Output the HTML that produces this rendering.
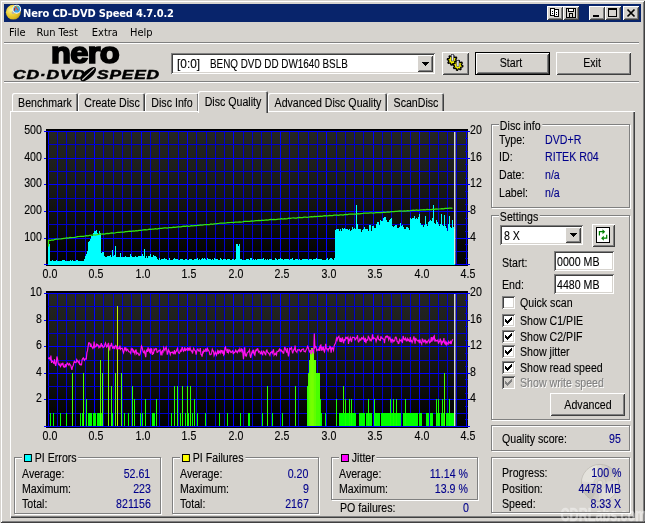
<!DOCTYPE html>
<html><head><meta charset="utf-8"><title>Nero CD-DVD Speed 4.7.0.2</title>
<style>
html,body{margin:0;padding:0}
body{width:645px;height:523px;overflow:hidden;background:#d6d3ce;position:relative;font-family:"Liberation Sans",sans-serif;font-size:12.5px;color:#000}
#root{position:absolute;left:0;top:0;width:645px;height:523px;will-change:transform}
.abs{position:absolute;display:block}
.win{position:absolute;left:0;top:0;width:645px;height:523px;box-sizing:border-box;box-shadow:inset 1px 1px 0 #d6d3ce,inset -1px -1px 0 #404040,inset 2px 2px 0 #fff,inset -2px -2px 0 #808080}
.title{position:absolute;left:4px;top:4px;width:637px;height:18px;background:#08246b}
.ttl{position:absolute;left:23.1px;top:6px;line-height:16px;font-family:"DejaVu Sans Condensed","Liberation Sans",sans-serif;font-weight:bold;font-size:11px;color:#fff;white-space:nowrap;letter-spacing:-0.15px}
.mn{position:absolute;top:25px;line-height:16px;font-family:"DejaVu Sans Condensed","Liberation Sans",sans-serif;font-size:11px;white-space:nowrap}
.sep{position:absolute;left:4px;width:635px;height:1px;background:#808080;border-bottom:1px solid #fff}
.rs{position:absolute;box-sizing:border-box;background:#d6d3ce;box-shadow:inset 1px 1px 0 #fff,inset -1px -1px 0 #404040,inset 2px 2px 0 #d6d3ce,inset -2px -2px 0 #808080}
.rs svg{display:block}
.sk{position:absolute;box-sizing:border-box;box-shadow:inset 1px 1px 0 #808080,inset -1px -1px 0 #fff,inset 2px 2px 0 #404040,inset -2px -2px 0 #d6d3ce}
.sk svg{display:block}
.gb{position:absolute;border:1px solid #808080;box-shadow:1px 1px 0 #fff,inset 1px 1px 0 #fff}
.gl{position:absolute;line-height:16px;-webkit-text-stroke:0.12px;background:#d6d3ce;padding:0 2px 0 1px;white-space:nowrap;transform:scaleX(.85);transform-origin:0 0}
.sq{display:inline-block;width:6px;height:6px;border:1px solid #000;margin:0 4px 0 2px;vertical-align:0px;transform:scaleX(1.16)}
.t{position:absolute;line-height:16px;-webkit-text-stroke:0.12px;white-space:nowrap;transform:scaleX(.85);transform-origin:0 0}
.t.r{transform-origin:100% 0;text-align:right}
.t.c{transform-origin:50% 0;text-align:center}
.v{color:#00008b}
.dis{color:#808080;text-shadow:1px 1px 0 #fff}
.ax{}
.nero{position:absolute;left:51.3px;top:37px;font-weight:bold;font-size:28.7px;line-height:32px;letter-spacing:-0.6px;-webkit-text-stroke:1.7px #000;color:#000;transform:scaleX(1.135);transform-origin:0 0}
.cds{position:absolute;top:66.5px;font-weight:bold;font-style:italic;font-size:12px;line-height:16px;letter-spacing:0.6px;-webkit-text-stroke:0.5px #000;transform:scaleX(1.45);transform-origin:0 0;white-space:nowrap}
.panel{position:absolute;box-sizing:border-box;box-shadow:inset 1px 1px 0 #fff,inset -1px -1px 0 #404040,inset -2px -2px 0 #808080}
.tab{position:absolute;box-sizing:border-box;background:#d6d3ce;border-radius:2px 2px 0 0;box-shadow:inset 1px 1px 0 #fff,inset -1px 0 0 #404040,inset -2px 0 0 #808080}
.tab.sel{box-shadow:inset 1px 1px 0 #fff,inset -1px 0 0 #404040,inset -2px 0 0 #808080}
.plot{position:absolute;background:linear-gradient(#000 0,#000 2px,#252623 2px,#1b1c1a 35%,#0e0e0d 68%,#000 98%)}
</style></head>
<body>
<div id="root">
<div class="win"></div>
<div class="title"></div>
<svg class="abs" style="left:5px;top:3.3px" width="18" height="18" viewBox="0 0 18 18">
<defs><radialGradient id="cdg" cx="0.35" cy="0.35" r="0.75"><stop offset="0" stop-color="#fbf3a0"/><stop offset="0.45" stop-color="#ecd03a"/><stop offset="0.8" stop-color="#d8b820"/><stop offset="1" stop-color="#a88a14"/></radialGradient></defs>
<circle cx="8.3" cy="9.2" r="7.4" fill="url(#cdg)"/>
<circle cx="8.2" cy="9.6" r="1.5" fill="#b8b4a0"/>
<circle cx="11.7" cy="6.2" r="3.9" fill="#38a4e8" stroke="#f4f6f8" stroke-width="1.1"/>
<path d="M9.2 4.6 A3 3 0 0 1 13.8 4" stroke="#7cc850" stroke-width="1" fill="none"/>
<path d="M10.2 3.4 L13.2 7.4" stroke="#e04828" stroke-width="1.1"/>
<path d="M9.6 5 L9.4 7.6" stroke="#c02010" stroke-width="1.2"/>
</svg>
<span class="ttl">Nero CD-DVD Speed 4.7.0.2</span>
<div class="rs" style="left:547px;top:6px;width:16px;height:14px"><svg width="16" height="14" viewBox="0 0 16 14" shape-rendering="crispEdges"><rect x="3.5" y="2.5" width="4" height="7" fill="#fff" stroke="#000"/><rect x="7.5" y="3.5" width="4" height="7" fill="#fff" stroke="#000"/><rect x="5" y="5" width="1" height="1"/><rect x="5" y="7" width="1" height="1"/><rect x="9" y="6" width="1" height="1"/><rect x="9" y="8" width="1" height="1"/></svg></div>
<div class="rs" style="left:563px;top:6px;width:16px;height:14px"><svg width="16" height="14" viewBox="0 0 16 14" shape-rendering="crispEdges"><rect x="3.5" y="2.5" width="9" height="9" fill="#d6d3ce" stroke="#000"/><rect x="5.5" y="2.5" width="5" height="3" fill="#fff" stroke="#000"/><rect x="6.5" y="7.5" width="3" height="4" fill="#d6d3ce" stroke="#000"/></svg></div>
<div class="rs" style="left:589px;top:6px;width:16px;height:14px"><svg width="16" height="14" viewBox="0 0 16 14" shape-rendering="crispEdges"><rect x="4" y="9" width="6" height="2"/></svg></div>
<div class="rs" style="left:605px;top:6px;width:16px;height:14px"><svg width="16" height="14" viewBox="0 0 16 14" shape-rendering="crispEdges"><rect x="3.5" y="2.5" width="8" height="8" fill="none" stroke="#000"/><rect x="3" y="2" width="9" height="2"/></svg></div>
<div class="rs" style="left:623px;top:6px;width:16px;height:14px"><svg width="16" height="14" viewBox="0 0 16 14"><path d="M4.5 3.5 L11.5 10.5 M11.5 3.5 L4.5 10.5" stroke="#000" stroke-width="1.7"/></svg></div>
<span class="mn" style="left:9px">File</span>
<span class="mn" style="left:36.5px">Run Test</span>
<span class="mn" style="left:91.8px">Extra</span>
<span class="mn" style="left:130px">Help</span>
<div class="sep" style="top:42px"></div>
<div class="sep" style="top:81px"></div>
<span class="nero">nero</span>
<span class="cds" style="left:13.3px">CD&#183;DVD</span>
<span class="cds" style="left:96.8px;transform:scaleX(1.44)">SPEED</span>
<svg class="abs" style="left:78px;top:65px" width="21" height="18" viewBox="78 65 21 18">
<ellipse cx="88.2" cy="74.2" rx="9.7" ry="4.1" transform="rotate(-41 88.2 74.2)" fill="#000"/>
<path d="M82.3 79.8 L94.3 68.4" stroke="#d6d3ce" stroke-width="1.2"/>
</svg>
<div class="sk" style="left:171px;top:53px;width:264px;height:21px;background:#fff"></div>
<span class="t " style="left:176.7px;top:56px;transform:scaleX(.95)">[0:0]</span>
<span class="t " style="left:210.0px;top:56px;transform:scaleX(.79)">BENQ DVD DD DW1640 BSLB</span>
<div class="rs" style="left:417px;top:55px;width:16px;height:17px;"><svg width="16" height="17" viewBox="0 0 16 17" shape-rendering="crispEdges"><rect x="5" y="7" width="7" height="1"/><rect x="6" y="8" width="5" height="1"/><rect x="7" y="9" width="3" height="1"/><rect x="8" y="10" width="1" height="1"/></svg></div>
<div class="rs" style="left:442px;top:52px;width:27px;height:23px;"><svg width="27" height="23" viewBox="0 0 27 23"><polygon points="15.28,8.69 15.08,9.65 13.47,9.90 13.08,10.48 13.47,12.07 12.66,12.61 11.35,11.64 10.65,11.78 9.81,13.18 8.85,12.98 8.60,11.37 8.02,10.98 6.43,11.37 5.89,10.56 6.86,9.25 6.72,8.55 5.32,7.71 5.52,6.75 7.13,6.50 7.52,5.92 7.13,4.33 7.94,3.79 9.25,4.76 9.95,4.62 10.79,3.22 11.75,3.42 12.00,5.03 12.58,5.42 14.17,5.03 14.71,5.84 13.74,7.15 13.88,7.85" fill="#f4f000" stroke="#000" stroke-width="1.3" stroke-linejoin="round"/><polygon points="20.88,13.89 20.68,14.85 19.07,15.10 18.68,15.68 19.07,17.27 18.26,17.81 16.95,16.84 16.25,16.98 15.41,18.38 14.45,18.18 14.20,16.57 13.62,16.18 12.03,16.57 11.49,15.76 12.46,14.45 12.32,13.75 10.92,12.91 11.12,11.95 12.73,11.70 13.12,11.12 12.73,9.53 13.54,8.99 14.85,9.96 15.55,9.82 16.39,8.42 17.35,8.62 17.60,10.23 18.18,10.62 19.77,10.23 20.31,11.04 19.34,12.35 19.48,13.05" fill="#f4f000" stroke="#000" stroke-width="1.3" stroke-linejoin="round"/><rect x="9.4" y="2.6" width="2.2" height="6.4" fill="#e8e8f0" stroke="#303040" stroke-width=".6"/><rect x="14.8" y="8.6" width="2.2" height="6" fill="#e8e8f0" stroke="#303040" stroke-width=".6"/></svg></div>
<div class="abs" style="left:475px;top:52px;width:75px;height:23px;background:#000"></div>
<div class="rs" style="left:476px;top:53px;width:73px;height:21px;"></div>
<span class="t c " style="left:410.8px;width:200px;top:55px;">Start</span>
<div class="rs" style="left:556px;top:52px;width:75px;height:23px;"></div>
<span class="t c " style="left:491.79999999999995px;width:200px;top:55px;">Exit</span>
<div class="panel" style="left:10px;top:111px;width:625px;height:407px"></div>
<div class="tab" style="left:12px;top:93px;width:66px;height:18px"></div>
<span class="t c " style="left:-55.0px;width:200px;top:95px;">Benchmark</span>
<div class="tab" style="left:78px;top:93px;width:67px;height:18px"></div>
<span class="t c " style="left:11.5px;width:200px;top:95px;">Create Disc</span>
<div class="tab" style="left:145px;top:93px;width:54px;height:18px"></div>
<span class="t c " style="left:72.0px;width:200px;top:95px;">Disc Info</span>
<div class="tab" style="left:268px;top:93px;width:119px;height:18px"></div>
<span class="t c " style="left:227.5px;width:200px;top:95px;">Advanced Disc Quality</span>
<div class="tab" style="left:387px;top:93px;width:57px;height:18px"></div>
<span class="t c " style="left:315.5px;width:200px;top:95px;">ScanDisc</span>
<div class="tab sel" style="left:198px;top:91px;width:70px;height:22px"></div>
<span class="t c " style="left:133px;width:200px;top:93.5px;">Disc Quality</span>
<div class="plot" style="left:46px;top:129px;width:422px;height:137px"></div>
<svg class="abs" style="left:40px;top:129px" width="436" height="137" viewBox="40 129 436 137" shape-rendering="crispEdges"><rect x="48" y="131" width="1" height="134" fill="#0000ff"/><rect x="57" y="131" width="1" height="134" fill="#0000cc"/><rect x="66" y="131" width="1" height="134" fill="#0000cc"/><rect x="75" y="131" width="1" height="134" fill="#0000cc"/><rect x="85" y="131" width="1" height="134" fill="#0000cc"/><rect x="94" y="131" width="1" height="134" fill="#0000ff"/><rect x="103" y="131" width="1" height="134" fill="#0000cc"/><rect x="113" y="131" width="1" height="134" fill="#0000cc"/><rect x="122" y="131" width="1" height="134" fill="#0000cc"/><rect x="131" y="131" width="1" height="134" fill="#0000cc"/><rect x="141" y="131" width="1" height="134" fill="#0000ff"/><rect x="150" y="131" width="1" height="134" fill="#0000cc"/><rect x="159" y="131" width="1" height="134" fill="#0000cc"/><rect x="168" y="131" width="1" height="134" fill="#0000cc"/><rect x="178" y="131" width="1" height="134" fill="#0000cc"/><rect x="187" y="131" width="1" height="134" fill="#0000ff"/><rect x="196" y="131" width="1" height="134" fill="#0000cc"/><rect x="206" y="131" width="1" height="134" fill="#0000cc"/><rect x="215" y="131" width="1" height="134" fill="#0000cc"/><rect x="224" y="131" width="1" height="134" fill="#0000cc"/><rect x="233" y="131" width="1" height="134" fill="#0000ff"/><rect x="243" y="131" width="1" height="134" fill="#0000cc"/><rect x="252" y="131" width="1" height="134" fill="#0000cc"/><rect x="261" y="131" width="1" height="134" fill="#0000cc"/><rect x="271" y="131" width="1" height="134" fill="#0000cc"/><rect x="280" y="131" width="1" height="134" fill="#0000ff"/><rect x="289" y="131" width="1" height="134" fill="#0000cc"/><rect x="298" y="131" width="1" height="134" fill="#0000cc"/><rect x="308" y="131" width="1" height="134" fill="#0000cc"/><rect x="317" y="131" width="1" height="134" fill="#0000cc"/><rect x="326" y="131" width="1" height="134" fill="#0000ff"/><rect x="336" y="131" width="1" height="134" fill="#0000cc"/><rect x="345" y="131" width="1" height="134" fill="#0000cc"/><rect x="354" y="131" width="1" height="134" fill="#0000cc"/><rect x="363" y="131" width="1" height="134" fill="#0000cc"/><rect x="373" y="131" width="1" height="134" fill="#0000ff"/><rect x="382" y="131" width="1" height="134" fill="#0000cc"/><rect x="391" y="131" width="1" height="134" fill="#0000cc"/><rect x="401" y="131" width="1" height="134" fill="#0000cc"/><rect x="410" y="131" width="1" height="134" fill="#0000cc"/><rect x="419" y="131" width="1" height="134" fill="#0000ff"/><rect x="429" y="131" width="1" height="134" fill="#0000cc"/><rect x="438" y="131" width="1" height="134" fill="#0000cc"/><rect x="447" y="131" width="1" height="134" fill="#0000cc"/><rect x="456" y="131" width="1" height="134" fill="#0000cc"/><rect x="466" y="131" width="1" height="134" fill="#0000ff"/><rect x="44" y="131" width="426" height="1" fill="#0000ff"/><rect x="46" y="144" width="422" height="1" fill="#0000cc"/><rect x="44" y="158" width="426" height="1" fill="#0000ff"/><rect x="46" y="171" width="422" height="1" fill="#0000cc"/><rect x="44" y="184" width="426" height="1" fill="#0000ff"/><rect x="46" y="198" width="422" height="1" fill="#0000cc"/><rect x="44" y="211" width="426" height="1" fill="#0000ff"/><rect x="46" y="224" width="422" height="1" fill="#0000cc"/><rect x="44" y="238" width="426" height="1" fill="#0000ff"/><rect x="46" y="251" width="422" height="1" fill="#0000cc"/><rect x="44" y="264" width="426" height="1" fill="#0000ff"/><rect x="465" y="138" width="3" height="1" fill="#0000d0"/><rect x="465" y="151" width="3" height="1" fill="#0000d0"/><rect x="465" y="164" width="3" height="1" fill="#0000d0"/><rect x="465" y="178" width="3" height="1" fill="#0000d0"/><rect x="465" y="191" width="3" height="1" fill="#0000d0"/><rect x="465" y="204" width="3" height="1" fill="#0000d0"/><rect x="465" y="218" width="3" height="1" fill="#0000d0"/><rect x="465" y="231" width="3" height="1" fill="#0000d0"/><rect x="465" y="244" width="3" height="1" fill="#0000d0"/><rect x="465" y="258" width="3" height="1" fill="#0000d0"/><rect x="46" y="129" width="2" height="137" fill="#000"/><rect x="44" y="131" width="4" height="1" fill="#0000ff"/><rect x="44" y="264" width="4" height="1" fill="#0000ff"/><polygon points="48,264.5 48.0,243.0 48.5,245.7 49.0,244.8 49.5,244.1 50.0,245.7 50.5,261.4 51.0,260.7 51.5,260.9 52.0,260.8 52.5,260.3 53.0,259.8 53.5,260.6 54.0,261.2 54.5,260.8 55.0,261.4 55.5,261.3 56.0,261.0 56.5,260.1 57.0,260.9 57.5,261.2 58.0,261.3 58.5,261.0 59.0,260.2 59.5,260.8 60.0,261.2 60.5,261.0 61.0,261.2 61.5,261.0 62.0,260.5 62.5,260.0 63.0,260.5 63.5,259.9 64.0,260.9 64.5,260.4 65.0,260.7 65.5,261.3 66.0,261.2 66.5,261.0 67.0,261.0 67.5,260.9 68.0,261.3 68.5,260.9 69.0,259.8 69.5,260.9 70.0,261.2 70.5,259.9 71.0,260.9 71.5,261.3 72.0,261.1 72.5,259.9 73.0,261.1 73.5,260.6 74.0,261.1 74.5,261.3 75.0,261.2 75.5,261.0 76.0,261.3 76.5,260.0 77.0,261.1 77.5,260.2 78.0,260.9 78.5,260.6 79.0,259.9 79.5,261.1 80.0,261.0 80.5,261.2 81.0,261.4 81.5,260.7 82.0,260.4 82.5,260.9 83.0,260.2 83.5,261.2 84.0,260.7 84.5,259.3 85.0,257.4 85.5,255.9 86.0,255.3 86.5,253.9 87.0,252.7 87.5,251.3 88.0,242.8 88.5,242.2 89.0,241.2 89.5,240.7 90.0,239.6 90.5,239.0 91.0,235.0 91.5,236.2 92.0,236.3 92.5,236.0 93.0,230.6 93.5,232.6 94.0,231.4 94.5,231.4 95.0,233.2 95.5,230.6 96.0,229.0 96.5,230.3 97.0,230.3 97.5,233.0 98.0,234.4 98.5,234.0 99.0,233.8 99.5,230.9 100.0,230.9 100.5,232.6 101.0,251.9 101.5,252.5 102.0,251.7 102.5,252.2 103.0,250.7 103.5,252.0 104.0,257.0 104.5,256.0 105.0,255.7 105.5,256.5 106.0,256.5 106.5,257.0 107.0,255.8 107.5,256.4 108.0,257.2 108.5,256.3 109.0,257.4 109.5,256.4 110.0,256.5 110.5,255.2 111.0,256.1 111.5,256.8 112.0,249.8 112.5,249.8 113.0,256.8 113.5,256.2 114.0,255.7 114.5,255.6 115.0,246.3 115.5,246.3 116.0,255.6 116.5,257.1 117.0,257.0 117.5,257.2 118.0,255.6 118.5,256.8 119.0,257.2 119.5,256.6 120.0,252.5 120.5,252.5 121.0,257.2 121.5,257.3 122.0,257.1 122.5,257.1 123.0,256.4 123.5,257.1 124.0,257.2 124.5,257.3 125.0,256.4 125.5,255.9 126.0,256.7 126.5,256.6 127.0,256.7 127.5,256.5 128.0,256.8 128.5,256.9 129.0,256.6 129.5,257.6 130.0,253.8 130.5,253.8 131.0,256.9 131.5,256.1 132.0,257.0 132.5,256.9 133.0,256.6 133.5,256.7 134.0,256.5 134.5,256.8 135.0,256.5 135.5,255.8 136.0,257.3 136.5,256.7 137.0,256.8 137.5,256.7 138.0,256.9 138.5,255.7 139.0,257.0 139.5,255.6 140.0,256.6 140.5,255.6 141.0,256.8 141.5,256.4 142.0,253.8 142.5,253.8 143.0,257.0 143.5,255.7 144.0,249.0 144.5,249.0 145.0,256.7 145.5,257.5 146.0,256.6 146.5,255.9 147.0,257.3 147.5,257.5 148.0,257.5 148.5,256.2 149.0,256.9 149.5,256.2 150.0,254.4 150.5,254.4 151.0,257.4 151.5,256.7 152.0,256.6 152.5,256.8 153.0,255.6 153.5,255.4 154.0,256.1 154.5,255.9 155.0,256.7 155.5,256.3 156.0,257.0 156.5,256.6 157.0,259.5 157.5,259.2 158.0,259.3 158.5,259.8 159.0,259.6 159.5,258.2 160.0,259.2 160.5,259.8 161.0,259.3 161.5,259.4 162.0,259.2 162.5,258.5 163.0,259.5 163.5,259.4 164.0,259.7 164.5,258.3 165.0,259.9 165.5,259.4 166.0,258.9 166.5,258.9 167.0,259.8 167.5,259.7 168.0,259.8 168.5,259.5 169.0,259.0 169.5,258.2 170.0,259.5 170.5,259.9 171.0,259.6 171.5,259.6 172.0,259.7 172.5,259.5 173.0,259.3 173.5,259.0 174.0,259.0 174.5,258.4 175.0,259.7 175.5,258.5 176.0,259.6 176.5,259.4 177.0,258.8 177.5,258.5 178.0,258.7 178.5,259.7 179.0,259.4 179.5,259.6 180.0,259.3 180.5,259.1 181.0,258.3 181.5,258.7 182.0,259.2 182.5,258.9 183.0,258.4 183.5,259.8 184.0,259.4 184.5,259.8 185.0,259.8 185.5,259.5 186.0,258.4 186.5,259.2 187.0,259.4 187.5,259.6 188.0,259.6 188.5,259.8 189.0,259.7 189.5,259.3 190.0,259.4 190.5,259.4 191.0,259.7 191.5,259.2 192.0,259.5 192.5,259.6 193.0,258.2 193.5,259.5 194.0,258.5 194.5,259.3 195.0,259.6 195.5,259.4 196.0,259.4 196.5,259.4 197.0,259.6 197.5,258.2 198.0,258.4 198.5,259.6 199.0,259.6 199.5,259.0 200.0,259.4 200.5,259.8 201.0,259.4 201.5,259.2 202.0,259.5 202.5,258.4 203.0,259.2 203.5,259.2 204.0,259.1 204.5,258.4 205.0,258.6 205.5,258.9 206.0,259.7 206.5,259.6 207.0,258.3 207.5,258.2 208.0,258.8 208.5,259.1 209.0,259.0 209.5,259.1 210.0,259.6 210.5,259.3 211.0,259.8 211.5,259.6 212.0,258.3 212.5,258.5 213.0,258.8 213.5,259.5 214.0,259.8 214.5,258.2 215.0,259.7 215.5,259.1 216.0,259.6 216.5,258.8 217.0,258.4 217.5,259.3 218.0,259.2 218.5,259.5 219.0,259.5 219.5,259.6 220.0,259.4 220.5,258.3 221.0,258.8 221.5,258.9 222.0,259.7 222.5,259.5 223.0,258.8 223.5,259.3 224.0,259.2 224.5,259.2 225.0,258.5 225.5,259.3 226.0,259.7 226.5,259.7 227.0,258.6 227.5,259.1 228.0,259.9 228.5,259.4 229.0,258.7 229.5,259.5 230.0,258.3 230.5,259.7 231.0,258.4 231.5,259.5 232.0,259.8 232.5,259.0 233.0,259.5 233.5,258.9 234.0,259.7 234.5,259.6 235.0,259.0 235.5,259.0 236.0,259.3 236.5,243.9 237.0,244.4 237.5,244.2 238.0,245.2 238.5,245.9 239.0,243.7 239.5,243.9 240.0,258.7 240.5,258.8 241.0,259.7 241.5,259.2 242.0,258.3 242.5,259.5 243.0,259.7 243.5,259.7 244.0,259.5 244.5,259.8 245.0,258.7 245.5,259.6 246.0,259.0 246.5,259.4 247.0,259.7 247.5,258.6 248.0,259.2 248.5,259.4 249.0,259.5 249.5,259.6 250.0,259.6 250.5,258.3 251.0,259.8 251.5,258.4 252.0,259.3 252.5,259.8 253.0,259.7 253.5,259.3 254.0,258.5 254.5,259.6 255.0,259.5 255.5,258.5 256.0,259.4 256.5,259.5 257.0,259.1 257.5,259.3 258.0,258.1 258.5,258.9 259.0,259.8 259.5,259.1 260.0,259.1 260.5,259.1 261.0,259.4 261.5,259.4 262.0,259.3 262.5,259.3 263.0,259.1 263.5,258.3 264.0,259.7 264.5,259.5 265.0,259.3 265.5,259.3 266.0,259.6 266.5,259.6 267.0,259.7 267.5,259.4 268.0,259.2 268.5,259.7 269.0,258.8 269.5,259.4 270.0,259.8 270.5,259.0 271.0,258.1 271.5,259.4 272.0,258.4 272.5,259.7 273.0,259.7 273.5,259.5 274.0,259.7 274.5,259.6 275.0,258.6 275.5,258.1 276.0,259.2 276.5,259.3 277.0,259.2 277.5,259.6 278.0,259.4 278.5,259.0 279.0,259.1 279.5,259.1 280.0,258.8 280.5,258.2 281.0,258.8 281.5,259.2 282.0,258.2 282.5,259.0 283.0,259.4 283.5,259.5 284.0,259.8 284.5,259.0 285.0,259.5 285.5,259.2 286.0,257.9 286.5,258.8 287.0,259.2 287.5,259.4 288.0,259.4 288.5,258.8 289.0,258.7 289.5,259.6 290.0,259.7 290.5,258.7 291.0,258.7 291.5,259.1 292.0,259.6 292.5,257.8 293.0,258.9 293.5,259.5 294.0,259.4 294.5,259.6 295.0,259.5 295.5,258.6 296.0,259.4 296.5,258.5 297.0,258.9 297.5,259.3 298.0,259.3 298.5,259.7 299.0,259.6 299.5,258.6 300.0,259.5 300.5,259.7 301.0,259.2 301.5,259.7 302.0,259.3 302.5,258.5 303.0,259.6 303.5,258.5 304.0,258.9 304.5,259.0 305.0,259.0 305.5,258.9 306.0,259.4 306.5,259.3 307.0,259.4 307.5,259.4 308.0,258.8 308.5,259.6 309.0,259.6 309.5,259.4 310.0,258.2 310.5,259.1 311.0,259.8 311.5,258.5 312.0,259.3 312.5,259.8 313.0,259.5 313.5,259.4 314.0,259.0 314.5,258.5 315.0,259.2 315.5,258.6 316.0,258.6 316.5,258.3 317.0,258.1 317.5,258.8 318.0,259.2 318.5,259.3 319.0,258.6 319.5,258.8 320.0,259.3 320.5,258.6 321.0,259.4 321.5,258.9 322.0,259.6 322.5,259.6 323.0,259.4 323.5,259.8 324.0,259.3 324.5,259.9 325.0,259.5 325.5,259.5 326.0,259.3 326.5,259.3 327.0,259.2 327.5,258.0 328.0,259.5 328.5,259.7 329.0,258.7 329.5,259.4 330.0,259.1 330.5,257.6 331.0,259.4 331.5,258.4 332.0,259.4 332.5,258.9 333.0,259.3 333.5,259.7 334.0,259.3 334.5,258.6 335.0,229.9 335.5,229.9 336.0,230.7 336.5,228.9 337.0,229.3 337.5,229.3 338.0,229.8 338.5,228.8 339.0,225.1 339.5,230.6 340.0,230.7 340.5,229.2 341.0,229.8 341.5,231.5 342.0,228.5 342.5,227.7 343.0,230.9 343.5,228.6 344.0,228.1 344.5,228.1 345.0,228.8 345.5,229.2 346.0,228.4 346.5,228.8 347.0,227.7 347.5,228.8 348.0,228.8 348.5,230.3 349.0,229.0 349.5,229.0 350.0,227.2 350.5,230.6 351.0,229.9 351.5,230.1 352.0,225.9 352.5,226.7 353.0,230.0 353.5,229.3 354.0,229.5 354.5,227.8 355.0,229.4 355.5,229.4 356.0,227.1 356.5,205.0 357.0,205.0 357.5,223.7 358.0,225.8 358.5,228.7 359.0,229.5 359.5,229.1 360.0,228.0 360.5,229.5 361.0,225.9 361.5,231.6 362.0,228.7 362.5,230.1 363.0,227.7 363.5,229.0 364.0,228.0 364.5,227.4 365.0,232.1 365.5,229.4 366.0,228.9 366.5,229.4 367.0,229.0 367.5,228.5 368.0,230.5 368.5,231.2 369.0,229.2 369.5,225.4 370.0,231.4 370.5,224.6 371.0,226.2 371.5,230.7 372.0,227.6 372.5,226.3 373.0,226.5 373.5,225.7 374.0,227.9 374.5,228.3 375.0,225.9 375.5,227.8 376.0,225.7 376.5,224.3 377.0,221.8 377.5,221.8 378.0,225.4 378.5,222.0 379.0,222.9 379.5,225.1 380.0,223.5 380.5,219.7 381.0,219.5 381.5,220.9 382.0,218.9 382.5,220.5 383.0,220.6 383.5,217.6 384.0,219.7 384.5,216.5 385.0,220.3 385.5,217.0 386.0,222.8 386.5,220.2 387.0,221.1 387.5,221.7 388.0,219.1 388.5,222.0 389.0,217.7 389.5,219.5 390.0,218.6 390.5,218.5 391.0,218.6 391.5,218.0 392.0,222.0 392.5,226.5 393.0,224.9 393.5,226.7 394.0,224.4 394.5,225.7 395.0,224.5 395.5,224.7 396.0,226.3 396.5,225.4 397.0,223.4 397.5,227.8 398.0,226.7 398.5,228.1 399.0,223.7 399.5,227.5 400.0,226.0 400.5,223.0 401.0,226.8 401.5,225.9 402.0,223.7 402.5,225.4 403.0,225.1 403.5,227.3 404.0,227.2 404.5,229.2 405.0,226.2 405.5,229.1 406.0,226.4 406.5,227.4 407.0,227.6 407.5,227.4 408.0,229.6 408.5,228.4 409.0,228.1 409.5,230.5 410.0,220.8 410.5,217.6 411.0,214.4 411.5,218.8 412.0,220.4 412.5,217.9 413.0,212.0 413.5,217.9 414.0,216.8 414.5,216.0 415.0,217.7 415.5,219.2 416.0,215.9 416.5,218.1 417.0,220.5 417.5,218.7 418.0,218.3 418.5,217.3 419.0,218.6 419.5,213.6 420.0,226.9 420.5,222.9 421.0,221.0 421.5,225.0 422.0,227.0 422.5,224.9 423.0,224.6 423.5,227.5 424.0,224.8 424.5,225.5 425.0,216.4 425.5,216.4 426.0,224.4 426.5,223.8 427.0,224.6 427.5,226.6 428.0,221.9 428.5,221.6 429.0,223.9 429.5,221.5 430.0,219.2 430.5,220.1 431.0,222.1 431.5,220.6 432.0,222.3 432.5,218.1 433.0,205.2 433.5,205.2 434.0,223.1 434.5,222.6 435.0,221.8 435.5,223.6 436.0,220.8 436.5,220.4 437.0,219.6 437.5,222.2 438.0,225.1 438.5,223.7 439.0,225.1 439.5,226.4 440.0,225.5 440.5,224.5 441.0,213.8 441.5,213.8 442.0,227.0 442.5,224.6 443.0,221.5 443.5,226.6 444.0,215.1 444.5,215.1 445.0,225.9 445.5,225.7 446.0,230.3 446.5,227.8 447.0,229.4 447.5,231.5 448.0,228.4 448.5,224.0 449.0,216.4 449.5,216.4 450.0,228.8 450.5,227.5 451.0,225.3 451.5,227.7 452.0,220.4 452.5,220.4 453.0,230.3 453.5,227.2 454.0,228.5 454.5,229.4 455.0,229.6 455.0,264.5" fill="#00ffff"/><polyline points="48.5,246.5 48.5,240.5 49.0,240.1 50.5,240.3 52.0,239.9 53.5,240.0 55.0,239.3 56.5,239.2 58.0,239.1 59.5,239.0 61.0,238.9 62.5,238.6 64.0,238.3 65.5,238.2 67.0,237.8 68.5,238.0 70.0,237.5 71.5,237.6 73.0,237.5 74.5,237.4 76.0,237.1 77.5,236.6 79.0,236.5 80.5,236.3 82.0,236.4 83.5,236.3 85.0,236.0 86.5,235.7 88.0,235.8 89.5,235.4 91.0,235.3 92.5,235.0 94.0,234.9 95.5,235.0 97.0,234.7 98.5,234.3 100.0,234.1 101.5,234.1 103.0,233.8 104.5,234.0 106.0,233.7 107.5,233.4 109.0,233.6 110.5,233.2 112.0,232.9 113.5,233.1 115.0,233.0 116.5,232.5 118.0,232.4 119.5,232.4 121.0,232.2 122.5,232.1 124.0,232.1 125.5,231.6 127.0,231.7 128.5,231.3 130.0,231.2 131.5,231.3 133.0,230.8 134.5,231.0 136.0,230.6 137.5,230.8 139.0,230.4 140.5,230.3 142.0,230.1 143.5,229.8 145.0,229.7 146.5,229.9 148.0,229.7 149.5,229.2 151.0,229.3 152.5,229.0 154.0,229.0 155.5,228.7 157.0,229.0 158.5,228.6 160.0,228.3 161.5,228.4 163.0,228.1 164.5,227.9 166.0,227.8 167.5,228.0 169.0,227.5 170.5,227.5 172.0,227.6 173.5,227.1 175.0,227.3 176.5,227.1 178.0,226.9 179.5,226.8 181.0,226.8 182.5,226.3 184.0,226.2 185.5,226.4 187.0,225.9 188.5,226.3 190.0,226.1 191.5,225.6 193.0,225.8 194.5,225.7 196.0,225.7 197.5,225.4 199.0,225.4 200.5,225.0 202.0,225.2 203.5,224.8 205.0,224.5 206.5,224.5 208.0,224.5 209.5,224.5 211.0,223.9 212.5,224.3 214.0,223.9 215.5,223.9 217.0,223.6 218.5,223.5 220.0,223.2 221.5,223.1 223.0,223.1 224.5,223.1 226.0,223.0 227.5,222.7 229.0,222.6 230.5,222.5 232.0,222.3 233.5,222.5 235.0,222.1 236.5,222.1 238.0,222.1 239.5,221.8 241.0,222.1 242.5,222.0 244.0,221.4 245.5,221.3 247.0,221.4 248.5,221.4 250.0,221.3 251.5,220.8 253.0,221.1 254.5,220.8 256.0,220.6 257.5,220.7 259.0,220.3 260.5,220.5 262.0,220.2 263.5,220.3 265.0,220.1 266.5,219.9 268.0,220.0 269.5,219.6 271.0,219.4 272.5,219.7 274.0,219.4 275.5,219.6 277.0,219.3 278.5,219.1 280.0,219.2 281.5,218.6 283.0,219.0 284.5,218.7 286.0,218.9 287.5,218.6 289.0,218.2 290.5,218.3 292.0,218.0 293.5,217.9 295.0,218.0 296.5,218.0 298.0,217.6 299.5,217.4 301.0,217.7 302.5,217.7 304.0,217.2 305.5,217.2 307.0,217.3 308.5,217.2 310.0,216.9 311.5,216.6 313.0,216.9 314.5,216.5 316.0,216.7 317.5,216.4 319.0,216.4 320.5,216.2 322.0,216.3 323.5,215.8 325.0,215.7 326.5,215.8 328.0,215.8 329.5,215.5 331.0,215.7 332.5,215.7 334.0,215.2 335.5,215.2 337.0,215.1 338.5,215.3 340.0,214.8 341.5,214.8 343.0,215.0 344.5,214.6 346.0,214.3 347.5,214.6 349.0,214.1 350.5,214.0 352.0,214.0 353.5,214.1 355.0,214.0 356.5,214.0 358.0,213.6 359.5,213.9 361.0,213.6 362.5,213.5 364.0,213.2 365.5,213.1 367.0,213.2 368.5,213.1 370.0,212.9 371.5,212.9 373.0,213.0 374.5,212.9 376.0,212.6 377.5,212.6 379.0,212.6 380.5,212.5 382.0,212.5 383.5,212.2 385.0,212.3 386.5,212.2 388.0,211.8 389.5,212.0 391.0,211.6 392.5,211.7 394.0,211.7 395.5,211.4 397.0,211.4 398.5,211.1 400.0,211.0 401.5,211.1 403.0,211.1 404.5,210.9 406.0,211.0 407.5,210.7 409.0,210.9 410.5,210.7 412.0,210.3 413.5,210.2 415.0,210.3 416.5,210.0 418.0,210.3 419.5,210.1 421.0,209.9 422.5,209.9 424.0,209.7 425.5,209.9 427.0,209.5 428.5,209.7 430.0,209.5 431.5,209.5 433.0,209.1 434.5,209.4 436.0,208.8 437.5,209.1 439.0,209.0 440.5,208.9 442.0,208.7 443.5,208.8 445.0,208.4 446.5,208.3 448.0,208.3 449.5,208.1 451.0,208.1 452.5,208.3" fill="none" stroke="#34e410" stroke-width="1.25" shape-rendering="auto"/><rect x="454.1" y="132" width="1.3" height="132" fill="#ececec" shape-rendering="auto"/></svg>
<span class="t r ax" style="right:603.5px;top:228.8px;">100</span>
<span class="t r ax" style="right:603.5px;top:202.1px;">200</span>
<span class="t r ax" style="right:603.5px;top:175.4px;">300</span>
<span class="t r ax" style="right:603.5px;top:148.7px;">400</span>
<span class="t r ax" style="right:603.5px;top:122.0px;">500</span>
<span class="t ax" style="left:470.3px;top:228.8px;">4</span>
<span class="t ax" style="left:470.3px;top:202.1px;">8</span>
<span class="t ax" style="left:470.3px;top:175.4px;">12</span>
<span class="t ax" style="left:470.3px;top:148.7px;">16</span>
<span class="t ax" style="left:470.3px;top:122.0px;">20</span>
<span class="t c ax" style="left:-50.1px;width:200px;top:266.0px;">0.0</span>
<span class="t c ax" style="left:-3.64444444444446px;width:200px;top:266.0px;">0.5</span>
<span class="t c ax" style="left:42.8111111111111px;width:200px;top:266.0px;">1.0</span>
<span class="t c ax" style="left:89.26666666666668px;width:200px;top:266.0px;">1.5</span>
<span class="t c ax" style="left:135.7222222222222px;width:200px;top:266.0px;">2.0</span>
<span class="t c ax" style="left:182.1777777777778px;width:200px;top:266.0px;">2.5</span>
<span class="t c ax" style="left:228.63333333333338px;width:200px;top:266.0px;">3.0</span>
<span class="t c ax" style="left:275.0888888888889px;width:200px;top:266.0px;">3.5</span>
<span class="t c ax" style="left:321.5444444444444px;width:200px;top:266.0px;">4.0</span>
<span class="t c ax" style="left:368.0px;width:200px;top:266.0px;">4.5</span>
<div class="plot" style="left:46px;top:291px;width:422px;height:137px"></div>
<svg class="abs" style="left:40px;top:291px" width="436" height="137" viewBox="40 291 436 137" shape-rendering="crispEdges"><rect x="48" y="293" width="1" height="134" fill="#0000ff"/><rect x="57" y="293" width="1" height="134" fill="#0000cc"/><rect x="66" y="293" width="1" height="134" fill="#0000cc"/><rect x="75" y="293" width="1" height="134" fill="#0000cc"/><rect x="85" y="293" width="1" height="134" fill="#0000cc"/><rect x="94" y="293" width="1" height="134" fill="#0000ff"/><rect x="103" y="293" width="1" height="134" fill="#0000cc"/><rect x="113" y="293" width="1" height="134" fill="#0000cc"/><rect x="122" y="293" width="1" height="134" fill="#0000cc"/><rect x="131" y="293" width="1" height="134" fill="#0000cc"/><rect x="141" y="293" width="1" height="134" fill="#0000ff"/><rect x="150" y="293" width="1" height="134" fill="#0000cc"/><rect x="159" y="293" width="1" height="134" fill="#0000cc"/><rect x="168" y="293" width="1" height="134" fill="#0000cc"/><rect x="178" y="293" width="1" height="134" fill="#0000cc"/><rect x="187" y="293" width="1" height="134" fill="#0000ff"/><rect x="196" y="293" width="1" height="134" fill="#0000cc"/><rect x="206" y="293" width="1" height="134" fill="#0000cc"/><rect x="215" y="293" width="1" height="134" fill="#0000cc"/><rect x="224" y="293" width="1" height="134" fill="#0000cc"/><rect x="233" y="293" width="1" height="134" fill="#0000ff"/><rect x="243" y="293" width="1" height="134" fill="#0000cc"/><rect x="252" y="293" width="1" height="134" fill="#0000cc"/><rect x="261" y="293" width="1" height="134" fill="#0000cc"/><rect x="271" y="293" width="1" height="134" fill="#0000cc"/><rect x="280" y="293" width="1" height="134" fill="#0000ff"/><rect x="289" y="293" width="1" height="134" fill="#0000cc"/><rect x="298" y="293" width="1" height="134" fill="#0000cc"/><rect x="308" y="293" width="1" height="134" fill="#0000cc"/><rect x="317" y="293" width="1" height="134" fill="#0000cc"/><rect x="326" y="293" width="1" height="134" fill="#0000ff"/><rect x="336" y="293" width="1" height="134" fill="#0000cc"/><rect x="345" y="293" width="1" height="134" fill="#0000cc"/><rect x="354" y="293" width="1" height="134" fill="#0000cc"/><rect x="363" y="293" width="1" height="134" fill="#0000cc"/><rect x="373" y="293" width="1" height="134" fill="#0000ff"/><rect x="382" y="293" width="1" height="134" fill="#0000cc"/><rect x="391" y="293" width="1" height="134" fill="#0000cc"/><rect x="401" y="293" width="1" height="134" fill="#0000cc"/><rect x="410" y="293" width="1" height="134" fill="#0000cc"/><rect x="419" y="293" width="1" height="134" fill="#0000ff"/><rect x="429" y="293" width="1" height="134" fill="#0000cc"/><rect x="438" y="293" width="1" height="134" fill="#0000cc"/><rect x="447" y="293" width="1" height="134" fill="#0000cc"/><rect x="456" y="293" width="1" height="134" fill="#0000cc"/><rect x="466" y="293" width="1" height="134" fill="#0000ff"/><rect x="44" y="293" width="426" height="1" fill="#0000ff"/><rect x="46" y="306" width="422" height="1" fill="#0000cc"/><rect x="44" y="320" width="426" height="1" fill="#0000ff"/><rect x="46" y="333" width="422" height="1" fill="#0000cc"/><rect x="44" y="346" width="426" height="1" fill="#0000ff"/><rect x="46" y="360" width="422" height="1" fill="#0000cc"/><rect x="44" y="373" width="426" height="1" fill="#0000ff"/><rect x="46" y="386" width="422" height="1" fill="#0000cc"/><rect x="44" y="399" width="426" height="1" fill="#0000ff"/><rect x="46" y="413" width="422" height="1" fill="#0000cc"/><rect x="44" y="426" width="426" height="1" fill="#0000ff"/><rect x="465" y="300" width="3" height="1" fill="#0000d0"/><rect x="465" y="313" width="3" height="1" fill="#0000d0"/><rect x="465" y="326" width="3" height="1" fill="#0000d0"/><rect x="465" y="340" width="3" height="1" fill="#0000d0"/><rect x="465" y="353" width="3" height="1" fill="#0000d0"/><rect x="465" y="366" width="3" height="1" fill="#0000d0"/><rect x="465" y="379" width="3" height="1" fill="#0000d0"/><rect x="465" y="393" width="3" height="1" fill="#0000d0"/><rect x="465" y="406" width="3" height="1" fill="#0000d0"/><rect x="465" y="419" width="3" height="1" fill="#0000d0"/><rect x="46" y="291" width="2" height="137" fill="#000"/><rect x="44" y="293" width="4" height="1" fill="#0000ff"/><rect x="44" y="426" width="4" height="1" fill="#0000ff"/><rect x="50.0" y="412.7" width="1" height="13.3" fill="#00ff00"/><rect x="53.0" y="412.7" width="1" height="13.3" fill="#00ff00"/><rect x="59.5" y="412.7" width="1" height="13.3" fill="#00ff00"/><rect x="65.5" y="412.7" width="1" height="13.3" fill="#00ff00"/><rect x="79.5" y="412.7" width="1" height="13.3" fill="#00ff00"/><rect x="82.0" y="412.7" width="1" height="13.3" fill="#00ff00"/><rect x="86.0" y="412.7" width="1" height="13.3" fill="#00ff00"/><rect x="88.0" y="412.7" width="1" height="13.3" fill="#00ff00"/><rect x="89.0" y="412.7" width="1" height="13.3" fill="#00ff00"/><rect x="90.0" y="412.7" width="1" height="13.3" fill="#00ff00"/><rect x="91.0" y="412.7" width="1" height="13.3" fill="#00ff00"/><rect x="93.0" y="412.7" width="1" height="13.3" fill="#00ff00"/><rect x="94.0" y="412.7" width="1" height="13.3" fill="#00ff00"/><rect x="95.0" y="412.7" width="1" height="13.3" fill="#00ff00"/><rect x="97.0" y="412.7" width="1" height="13.3" fill="#00ff00"/><rect x="98.0" y="412.7" width="1" height="13.3" fill="#00ff00"/><rect x="99.0" y="412.7" width="1" height="13.3" fill="#00ff00"/><rect x="100.0" y="412.7" width="1" height="13.3" fill="#00ff00"/><rect x="101.0" y="412.7" width="1" height="13.3" fill="#00ff00"/><rect x="112.0" y="412.7" width="1" height="13.3" fill="#00ff00"/><rect x="124.0" y="412.7" width="1" height="13.3" fill="#00ff00"/><rect x="128.0" y="412.7" width="1" height="13.3" fill="#00ff00"/><rect x="139.5" y="412.7" width="1" height="13.3" fill="#00ff00"/><rect x="141.5" y="412.7" width="1" height="13.3" fill="#00ff00"/><rect x="152.0" y="412.7" width="1" height="13.3" fill="#00ff00"/><rect x="153.0" y="412.7" width="1" height="13.3" fill="#00ff00"/><rect x="154.0" y="412.7" width="1" height="13.3" fill="#00ff00"/><rect x="170.5" y="412.7" width="1" height="13.3" fill="#00ff00"/><rect x="180.0" y="412.7" width="1" height="13.3" fill="#00ff00"/><rect x="185.0" y="412.7" width="1" height="13.3" fill="#00ff00"/><rect x="188.0" y="412.7" width="1" height="13.3" fill="#00ff00"/><rect x="192.0" y="412.7" width="1" height="13.3" fill="#00ff00"/><rect x="197.0" y="412.7" width="1" height="13.3" fill="#00ff00"/><rect x="204.6" y="412.7" width="1" height="13.3" fill="#00ff00"/><rect x="219.0" y="412.7" width="1" height="13.3" fill="#00ff00"/><rect x="226.7" y="412.7" width="1" height="13.3" fill="#00ff00"/><rect x="240.0" y="412.7" width="1" height="13.3" fill="#00ff00"/><rect x="248.0" y="412.7" width="1" height="13.3" fill="#00ff00"/><rect x="248.5" y="412.7" width="1" height="13.3" fill="#00ff00"/><rect x="262.0" y="412.7" width="1" height="13.3" fill="#00ff00"/><rect x="271.8" y="412.7" width="1" height="13.3" fill="#00ff00"/><rect x="282.0" y="412.7" width="1" height="13.3" fill="#00ff00"/><rect x="321.4" y="412.7" width="1" height="13.3" fill="#00ff00"/><rect x="324.5" y="412.7" width="1" height="13.3" fill="#00ff00"/><rect x="86.4" y="399.4" width="1" height="26.6" fill="#18ff00"/><rect x="133.7" y="399.4" width="1" height="26.6" fill="#18ff00"/><rect x="145.0" y="399.4" width="1" height="26.6" fill="#18ff00"/><rect x="156.0" y="399.4" width="1" height="26.6" fill="#18ff00"/><rect x="193.8" y="399.4" width="1" height="26.6" fill="#18ff00"/><rect x="111.0" y="386.1" width="1" height="39.9" fill="#30ff00"/><rect x="115.0" y="386.1" width="1" height="39.9" fill="#30ff00"/><rect x="131.8" y="386.1" width="1" height="39.9" fill="#30ff00"/><rect x="174.0" y="386.1" width="1" height="39.9" fill="#30ff00"/><rect x="177.0" y="386.1" width="1" height="39.9" fill="#30ff00"/><rect x="182.0" y="386.1" width="1" height="39.9" fill="#30ff00"/><rect x="187.0" y="386.1" width="1" height="39.9" fill="#30ff00"/><rect x="189.5" y="386.1" width="1" height="39.9" fill="#30ff00"/><rect x="71.7" y="372.8" width="1" height="53.2" fill="#48ff00"/><rect x="83.3" y="372.8" width="1" height="53.2" fill="#48ff00"/><rect x="101.5" y="372.8" width="1" height="53.2" fill="#48ff00"/><rect x="114.7" y="372.8" width="1" height="53.2" fill="#48ff00"/><rect x="121.0" y="372.8" width="1" height="53.2" fill="#48ff00"/><rect x="99.6" y="359.5" width="1" height="66.5" fill="#60ff00"/><rect x="108.3" y="346.2" width="1" height="79.8" fill="#78ff00"/><rect x="117.3" y="306.3" width="1" height="119.7" fill="#c4f000"/><rect x="267.0" y="386.1" width="1" height="39.9" fill="#30ff00"/><rect x="295.4" y="386.1" width="1" height="39.9" fill="#30ff00"/><rect x="343.0" y="386.1" width="1" height="39.9" fill="#30ff00"/><rect x="307.0" y="386.1" width="1" height="39.9" fill="#30ff00"/><rect x="308.0" y="372.8" width="1" height="53.2" fill="#48ff00"/><rect x="309.0" y="359.5" width="1" height="66.5" fill="#60ff00"/><rect x="310.0" y="350.2" width="1" height="75.8" fill="#70ff00"/><rect x="311.0" y="347.5" width="1" height="78.5" fill="#75ff00"/><rect x="312.0" y="347.5" width="1" height="78.5" fill="#75ff00"/><rect x="313.0" y="350.2" width="1" height="75.8" fill="#70ff00"/><rect x="314.0" y="359.5" width="1" height="66.5" fill="#60ff00"/><rect x="315.0" y="359.5" width="1" height="66.5" fill="#60ff00"/><rect x="316.0" y="372.8" width="1" height="53.2" fill="#48ff00"/><rect x="317.0" y="372.8" width="1" height="53.2" fill="#48ff00"/><rect x="318.0" y="372.8" width="1" height="53.2" fill="#48ff00"/><rect x="319.0" y="372.8" width="1" height="53.2" fill="#48ff00"/><rect x="320.0" y="399.4" width="1" height="26.6" fill="#18ff00"/><rect x="339.0" y="412.7" width="1" height="13.3" fill="#00ff00"/><rect x="340.0" y="412.7" width="1" height="13.3" fill="#00ff00"/><rect x="341.0" y="412.7" width="1" height="13.3" fill="#00ff00"/><rect x="342.0" y="412.7" width="1" height="13.3" fill="#00ff00"/><rect x="343.0" y="412.7" width="1" height="13.3" fill="#00ff00"/><rect x="344.0" y="412.7" width="1" height="13.3" fill="#00ff00"/><rect x="345.0" y="412.7" width="1" height="13.3" fill="#00ff00"/><rect x="346.0" y="412.7" width="1" height="13.3" fill="#00ff00"/><rect x="347.0" y="412.7" width="1" height="13.3" fill="#00ff00"/><rect x="348.0" y="412.7" width="1" height="13.3" fill="#00ff00"/><rect x="350.0" y="412.7" width="1" height="13.3" fill="#00ff00"/><rect x="351.0" y="412.7" width="1" height="13.3" fill="#00ff00"/><rect x="352.0" y="412.7" width="1" height="13.3" fill="#00ff00"/><rect x="353.0" y="412.7" width="1" height="13.3" fill="#00ff00"/><rect x="354.0" y="412.7" width="1" height="13.3" fill="#00ff00"/><rect x="355.0" y="412.7" width="1" height="13.3" fill="#00ff00"/><rect x="359.0" y="412.7" width="1" height="13.3" fill="#00ff00"/><rect x="360.0" y="412.7" width="1" height="13.3" fill="#00ff00"/><rect x="361.0" y="412.7" width="1" height="13.3" fill="#00ff00"/><rect x="362.0" y="412.7" width="1" height="13.3" fill="#00ff00"/><rect x="363.0" y="412.7" width="1" height="13.3" fill="#00ff00"/><rect x="364.0" y="412.7" width="1" height="13.3" fill="#00ff00"/><rect x="366.0" y="412.7" width="1" height="13.3" fill="#00ff00"/><rect x="367.0" y="412.7" width="1" height="13.3" fill="#00ff00"/><rect x="368.0" y="412.7" width="1" height="13.3" fill="#00ff00"/><rect x="369.0" y="412.7" width="1" height="13.3" fill="#00ff00"/><rect x="370.0" y="412.7" width="1" height="13.3" fill="#00ff00"/><rect x="371.0" y="412.7" width="1" height="13.3" fill="#00ff00"/><rect x="374.0" y="412.7" width="1" height="13.3" fill="#00ff00"/><rect x="375.0" y="412.7" width="1" height="13.3" fill="#00ff00"/><rect x="376.0" y="412.7" width="1" height="13.3" fill="#00ff00"/><rect x="377.0" y="412.7" width="1" height="13.3" fill="#00ff00"/><rect x="378.0" y="412.7" width="1" height="13.3" fill="#00ff00"/><rect x="379.0" y="412.7" width="1" height="13.3" fill="#00ff00"/><rect x="381.0" y="412.7" width="1" height="13.3" fill="#00ff00"/><rect x="382.0" y="412.7" width="1" height="13.3" fill="#00ff00"/><rect x="383.0" y="412.7" width="1" height="13.3" fill="#00ff00"/><rect x="384.0" y="412.7" width="1" height="13.3" fill="#00ff00"/><rect x="385.0" y="412.7" width="1" height="13.3" fill="#00ff00"/><rect x="386.0" y="412.7" width="1" height="13.3" fill="#00ff00"/><rect x="387.0" y="412.7" width="1" height="13.3" fill="#00ff00"/><rect x="388.0" y="412.7" width="1" height="13.3" fill="#00ff00"/><rect x="389.0" y="412.7" width="1" height="13.3" fill="#00ff00"/><rect x="390.0" y="412.7" width="1" height="13.3" fill="#00ff00"/><rect x="391.0" y="412.7" width="1" height="13.3" fill="#00ff00"/><rect x="392.0" y="412.7" width="1" height="13.3" fill="#00ff00"/><rect x="393.0" y="412.7" width="1" height="13.3" fill="#00ff00"/><rect x="394.0" y="412.7" width="1" height="13.3" fill="#00ff00"/><rect x="395.0" y="412.7" width="1" height="13.3" fill="#00ff00"/><rect x="396.0" y="412.7" width="1" height="13.3" fill="#00ff00"/><rect x="397.0" y="412.7" width="1" height="13.3" fill="#00ff00"/><rect x="398.0" y="412.7" width="1" height="13.3" fill="#00ff00"/><rect x="399.0" y="412.7" width="1" height="13.3" fill="#00ff00"/><rect x="400.0" y="412.7" width="1" height="13.3" fill="#00ff00"/><rect x="403.0" y="412.7" width="1" height="13.3" fill="#00ff00"/><rect x="404.0" y="412.7" width="1" height="13.3" fill="#00ff00"/><rect x="405.0" y="412.7" width="1" height="13.3" fill="#00ff00"/><rect x="406.0" y="412.7" width="1" height="13.3" fill="#00ff00"/><rect x="407.0" y="412.7" width="1" height="13.3" fill="#00ff00"/><rect x="408.0" y="412.7" width="1" height="13.3" fill="#00ff00"/><rect x="409.0" y="412.7" width="1" height="13.3" fill="#00ff00"/><rect x="410.0" y="412.7" width="1" height="13.3" fill="#00ff00"/><rect x="411.0" y="412.7" width="1" height="13.3" fill="#00ff00"/><rect x="412.0" y="412.7" width="1" height="13.3" fill="#00ff00"/><rect x="413.0" y="412.7" width="1" height="13.3" fill="#00ff00"/><rect x="414.0" y="412.7" width="1" height="13.3" fill="#00ff00"/><rect x="415.0" y="412.7" width="1" height="13.3" fill="#00ff00"/><rect x="416.0" y="412.7" width="1" height="13.3" fill="#00ff00"/><rect x="417.0" y="412.7" width="1" height="13.3" fill="#00ff00"/><rect x="419.0" y="412.7" width="1" height="13.3" fill="#00ff00"/><rect x="420.0" y="412.7" width="1" height="13.3" fill="#00ff00"/><rect x="421.0" y="412.7" width="1" height="13.3" fill="#00ff00"/><rect x="426.0" y="412.7" width="1" height="13.3" fill="#00ff00"/><rect x="427.0" y="412.7" width="1" height="13.3" fill="#00ff00"/><rect x="428.0" y="412.7" width="1" height="13.3" fill="#00ff00"/><rect x="430.0" y="412.7" width="1" height="13.3" fill="#00ff00"/><rect x="431.0" y="412.7" width="1" height="13.3" fill="#00ff00"/><rect x="432.0" y="412.7" width="1" height="13.3" fill="#00ff00"/><rect x="436.0" y="412.7" width="1" height="13.3" fill="#00ff00"/><rect x="437.0" y="412.7" width="1" height="13.3" fill="#00ff00"/><rect x="438.0" y="412.7" width="1" height="13.3" fill="#00ff00"/><rect x="439.0" y="412.7" width="1" height="13.3" fill="#00ff00"/><rect x="441.0" y="412.7" width="1" height="13.3" fill="#00ff00"/><rect x="442.0" y="412.7" width="1" height="13.3" fill="#00ff00"/><rect x="443.0" y="412.7" width="1" height="13.3" fill="#00ff00"/><rect x="444.0" y="412.7" width="1" height="13.3" fill="#00ff00"/><rect x="446.0" y="412.7" width="1" height="13.3" fill="#00ff00"/><rect x="447.0" y="412.7" width="1" height="13.3" fill="#00ff00"/><rect x="448.0" y="412.7" width="1" height="13.3" fill="#00ff00"/><rect x="449.0" y="412.7" width="1" height="13.3" fill="#00ff00"/><rect x="450.0" y="412.7" width="1" height="13.3" fill="#00ff00"/><rect x="451.0" y="412.7" width="1" height="13.3" fill="#00ff00"/><rect x="452.0" y="412.7" width="1" height="13.3" fill="#00ff00"/><rect x="453.0" y="412.7" width="1" height="13.3" fill="#00ff00"/><rect x="454.0" y="412.7" width="1" height="13.3" fill="#00ff00"/><rect x="335.7" y="399.4" width="1" height="26.6" fill="#18ff00"/><rect x="345.4" y="399.4" width="1" height="26.6" fill="#18ff00"/><rect x="348.5" y="399.4" width="1" height="26.6" fill="#18ff00"/><rect x="351.0" y="399.4" width="1" height="26.6" fill="#18ff00"/><rect x="368.0" y="399.4" width="1" height="26.6" fill="#18ff00"/><rect x="373.7" y="399.4" width="1" height="26.6" fill="#18ff00"/><rect x="390.0" y="399.4" width="1" height="26.6" fill="#18ff00"/><rect x="393.0" y="399.4" width="1" height="26.6" fill="#18ff00"/><rect x="396.0" y="399.4" width="1" height="26.6" fill="#18ff00"/><rect x="404.7" y="399.4" width="1" height="26.6" fill="#18ff00"/><rect x="435.7" y="399.4" width="1" height="26.6" fill="#18ff00"/><rect x="438.4" y="399.4" width="1" height="26.6" fill="#18ff00"/><rect x="441.5" y="399.4" width="1" height="26.6" fill="#18ff00"/><rect x="449.0" y="399.4" width="1" height="26.6" fill="#18ff00"/><rect x="453.5" y="399.4" width="1" height="26.6" fill="#18ff00"/><rect x="444.0" y="372.8" width="1" height="53.2" fill="#48ff00"/><polyline points="48.5,358.9 49.1,357.7 49.7,358.1 50.3,360.2 50.9,355.5 51.5,362.9 52.1,360.8 52.7,361.7 53.3,362.0 53.9,363.7 54.5,359.2 55.1,363.8 55.7,365.8 56.3,362.7 56.9,356.5 57.5,358.5 58.1,362.6 58.7,364.7 59.3,365.2 59.9,363.9 60.5,366.5 61.1,365.6 61.7,363.9 62.3,364.5 62.9,362.8 63.5,366.8 64.1,366.9 64.7,367.2 65.3,364.0 65.9,367.2 66.5,365.1 67.1,363.5 67.7,363.1 68.3,364.5 68.9,365.3 69.5,363.7 70.1,364.5 70.7,365.2 71.3,367.8 71.9,369.8 72.5,366.7 73.1,365.7 73.7,363.4 74.3,361.4 74.9,362.4 75.5,362.4 76.1,362.5 76.7,359.6 77.3,360.6 77.9,361.6 78.5,362.5 79.1,361.2 79.7,364.4 80.3,364.1 80.9,365.0 81.5,364.8 82.1,359.6 82.7,358.6 83.3,357.9 83.9,359.5 84.5,360.3 85.1,358.8 85.7,359.0 86.3,359.1 86.9,352.5 87.5,350.7 88.1,346.6 88.7,342.8 89.3,342.8 89.9,343.3 90.5,346.8 91.1,344.8 91.7,346.7 92.3,347.4 92.9,348.5 93.5,347.0 94.1,341.6 94.7,347.4 95.3,346.7 95.9,346.7 96.5,343.6 97.1,345.5 97.7,344.7 98.3,345.3 98.9,347.6 99.5,346.2 100.1,347.2 100.7,345.3 101.3,343.2 101.9,346.1 102.5,345.5 103.1,347.5 103.7,347.1 104.3,346.8 104.9,344.4 105.5,343.0 106.1,345.1 106.7,347.1 107.3,346.5 107.9,344.5 108.5,342.9 109.1,348.2 109.7,349.5 110.3,345.6 110.9,345.6 111.5,342.8 112.1,345.8 112.7,348.3 113.3,348.1 113.9,345.8 114.5,349.0 115.1,346.8 115.7,345.4 116.3,346.0 116.9,349.4 117.5,346.5 118.1,348.6 118.7,348.4 119.3,348.5 119.9,345.7 120.5,349.3 121.1,348.5 121.7,348.4 122.3,348.4 122.9,350.9 123.5,352.7 124.1,350.6 124.7,347.3 125.3,349.5 125.9,347.5 126.5,350.5 127.1,349.4 127.7,349.2 128.3,350.9 128.9,351.7 129.5,352.0 130.1,352.1 130.7,353.2 131.3,348.8 131.9,349.6 132.5,349.0 133.1,352.6 133.7,350.6 134.3,352.0 134.9,353.7 135.5,350.2 136.1,350.0 136.7,353.8 137.3,352.9 137.9,353.1 138.5,354.1 139.1,355.4 139.7,355.0 140.3,352.9 140.9,349.4 141.5,346.0 142.1,347.1 142.7,350.1 143.3,352.2 143.9,352.7 144.5,351.2 145.1,353.8 145.7,357.1 146.3,350.7 146.9,350.0 147.5,351.9 148.1,347.4 148.7,350.4 149.3,351.5 149.9,348.5 150.5,353.7 151.1,348.6 151.7,349.1 152.3,354.9 152.9,352.9 153.5,353.4 154.1,349.2 154.7,350.3 155.3,349.1 155.9,348.5 156.5,348.8 157.1,352.3 157.7,352.2 158.3,351.3 158.9,350.4 159.5,350.7 160.1,349.9 160.7,353.9 161.3,352.5 161.9,355.4 162.5,350.0 163.1,351.5 163.7,347.6 164.3,349.2 164.9,350.4 165.5,348.6 166.1,347.1 166.7,349.5 167.3,354.6 167.9,352.7 168.5,349.7 169.1,350.9 169.7,352.2 170.3,354.5 170.9,352.3 171.5,352.3 172.1,352.6 172.7,352.0 173.3,353.6 173.9,352.9 174.5,350.2 175.1,354.4 175.7,351.8 176.3,351.3 176.9,349.5 177.5,348.3 178.1,351.9 178.7,352.9 179.3,353.4 179.9,352.2 180.5,349.5 181.1,351.9 181.7,349.0 182.3,347.0 182.9,350.2 183.5,351.3 184.1,350.1 184.7,347.4 185.3,351.1 185.9,349.1 186.5,349.1 187.1,350.1 187.7,347.5 188.3,350.6 188.9,347.8 189.5,350.5 190.1,348.0 190.7,349.9 191.3,351.0 191.9,350.9 192.5,353.5 193.1,350.5 193.7,348.3 194.3,349.5 194.9,350.6 195.5,351.0 196.1,354.7 196.7,351.5 197.3,349.1 197.9,348.9 198.5,350.7 199.1,351.3 199.7,350.9 200.3,348.1 200.9,354.3 201.5,354.5 202.1,356.7 202.7,352.0 203.3,352.6 203.9,350.1 204.5,351.2 205.1,351.4 205.7,348.8 206.3,348.9 206.9,351.8 207.5,348.6 208.1,349.9 208.7,350.5 209.3,351.9 209.9,354.7 210.5,354.7 211.1,354.4 211.7,352.2 212.3,349.3 212.9,350.8 213.5,351.0 214.1,355.6 214.7,354.1 215.3,352.1 215.9,353.6 216.5,355.1 217.1,352.4 217.7,350.9 218.3,354.1 218.9,351.3 219.5,352.4 220.1,350.9 220.7,352.9 221.3,350.4 221.9,350.6 222.5,353.7 223.1,350.4 223.7,355.0 224.3,354.0 224.9,347.9 225.5,347.0 226.1,350.2 226.7,350.1 227.3,353.0 227.9,348.9 228.5,352.5 229.1,350.9 229.7,350.1 230.3,351.3 230.9,352.5 231.5,352.3 232.1,351.3 232.7,350.7 233.3,354.2 233.9,352.3 234.5,352.6 235.1,351.7 235.7,350.2 236.3,351.8 236.9,351.4 237.5,352.5 238.1,350.7 238.7,349.9 239.3,351.2 239.9,348.9 240.5,350.9 241.1,351.7 241.7,348.9 242.3,349.5 242.9,353.6 243.5,359.2 244.1,350.3 244.7,347.4 245.3,356.2 245.9,354.6 246.5,355.8 247.1,353.0 247.7,352.6 248.3,351.9 248.9,351.2 249.5,349.9 250.1,355.4 250.7,357.8 251.3,354.9 251.9,352.3 252.5,351.1 253.1,353.4 253.7,349.7 254.3,354.6 254.9,355.3 255.5,350.9 256.1,349.8 256.7,350.6 257.3,348.8 257.9,349.0 258.5,352.1 259.1,351.2 259.7,351.4 260.3,353.8 260.9,353.3 261.5,351.6 262.1,353.9 262.7,354.7 263.3,351.1 263.9,351.4 264.5,352.6 265.1,354.2 265.7,354.8 266.3,350.8 266.9,350.0 267.5,352.2 268.1,352.5 268.7,353.6 269.3,353.9 269.9,355.2 270.5,352.7 271.1,352.3 271.7,351.7 272.3,353.2 272.9,350.9 273.5,349.2 274.1,355.0 274.7,353.9 275.3,354.3 275.9,353.2 276.5,354.8 277.1,351.3 277.7,351.5 278.3,351.5 278.9,350.1 279.5,349.1 280.1,351.1 280.7,349.8 281.3,350.0 281.9,351.5 282.5,351.4 283.1,353.1 283.7,353.1 284.3,349.2 284.9,346.9 285.5,349.3 286.1,350.8 286.7,352.6 287.3,348.1 287.9,352.6 288.5,356.5 289.1,353.1 289.7,347.7 290.3,349.3 290.9,348.7 291.5,347.6 292.1,350.9 292.7,353.4 293.3,351.1 293.9,349.4 294.5,349.7 295.1,345.6 295.7,351.2 296.3,351.5 296.9,352.3 297.5,349.7 298.1,349.7 298.7,350.1 299.3,349.6 299.9,350.4 300.5,351.7 301.1,351.5 301.7,349.6 302.3,349.6 302.9,349.1 303.5,348.9 304.1,351.5 304.7,351.5 305.3,351.9 305.9,350.3 306.5,349.3 307.1,348.1 307.7,346.3 308.3,347.7 308.9,350.2 309.5,351.8 310.1,350.7 310.7,351.2 311.3,354.1 311.9,349.4 312.5,350.0 313.1,350.8 313.7,353.4 314.3,333.6 314.9,347.5 315.5,346.4 316.1,347.0 316.7,350.6 317.3,350.0 317.9,349.7 318.5,350.1 319.1,348.4 319.7,350.9 320.3,345.3 320.9,345.0 321.5,350.7 322.1,348.0 322.7,349.3 323.3,346.7 323.9,350.9 324.5,351.9 325.1,349.2 325.7,343.8 326.3,348.3 326.9,349.1 327.5,349.0 328.1,350.8 328.7,348.6 329.3,348.6 329.9,346.4 330.5,347.1 331.1,352.7 331.7,348.0 332.3,347.8 332.9,349.0 333.5,350.5 334.1,346.1 334.7,344.5 335.3,343.6 335.9,341.6 336.5,338.3 337.1,340.0 337.7,337.8 338.3,337.1 338.9,336.4 339.5,339.9 340.1,341.7 340.7,337.8 341.3,342.2 341.9,339.9 342.5,337.4 343.1,342.0 343.7,342.7 344.3,339.2 344.9,341.0 345.5,337.7 346.1,338.5 346.7,337.5 347.3,338.4 347.9,337.2 348.5,343.9 349.1,339.6 349.7,340.3 350.3,337.6 350.9,339.4 351.5,342.2 352.1,338.2 352.7,337.2 353.3,337.5 353.9,337.4 354.5,337.7 355.1,339.9 355.7,339.4 356.3,337.8 356.9,338.0 357.5,335.2 358.1,341.1 358.7,341.9 359.3,340.7 359.9,338.8 360.5,340.1 361.1,339.8 361.7,337.7 362.3,338.1 362.9,339.0 363.5,337.2 364.1,339.8 364.7,341.9 365.3,337.8 365.9,343.1 366.5,340.0 367.1,339.9 367.7,340.1 368.3,336.5 368.9,337.3 369.5,338.8 370.1,340.6 370.7,339.5 371.3,340.5 371.9,338.6 372.5,334.3 373.1,339.4 373.7,337.7 374.3,338.2 374.9,338.3 375.5,339.1 376.1,341.6 376.7,339.7 377.3,337.3 377.9,336.0 378.5,339.0 379.1,339.8 379.7,339.5 380.3,341.0 380.9,336.2 381.5,337.9 382.1,338.3 382.7,338.2 383.3,339.3 383.9,339.4 384.5,343.1 385.1,338.3 385.7,336.6 386.3,336.1 386.9,337.3 387.5,336.2 388.1,336.6 388.7,340.0 389.3,338.6 389.9,337.3 390.5,339.4 391.1,342.7 391.7,339.4 392.3,339.2 392.9,341.8 393.5,340.4 394.1,341.1 394.7,340.4 395.3,337.4 395.9,337.1 396.5,338.2 397.1,341.4 397.7,341.5 398.3,343.4 398.9,343.2 399.5,339.6 400.1,340.8 400.7,340.7 401.3,339.7 401.9,342.0 402.5,342.4 403.1,336.0 403.7,338.0 404.3,339.8 404.9,339.4 405.5,338.1 406.1,340.8 406.7,341.0 407.3,338.7 407.9,340.3 408.5,339.5 409.1,341.1 409.7,341.5 410.3,337.0 410.9,341.2 411.5,340.7 412.1,342.6 412.7,341.1 413.3,339.0 413.9,336.3 414.5,339.1 415.1,343.7 415.7,337.8 416.3,339.7 416.9,339.9 417.5,340.9 418.1,341.0 418.7,340.4 419.3,343.2 419.9,339.5 420.5,342.0 421.1,342.8 421.7,344.1 422.3,339.1 422.9,339.6 423.5,342.1 424.1,342.2 424.7,340.1 425.3,340.1 425.9,342.9 426.5,341.6 427.1,342.7 427.7,341.1 428.3,340.7 428.9,339.6 429.5,342.8 430.1,342.4 430.7,341.3 431.3,337.1 431.9,341.6 432.5,337.3 433.1,340.3 433.7,336.7 434.3,335.8 434.9,341.7 435.5,339.8 436.1,340.8 436.7,340.6 437.3,340.8 437.9,340.0 438.5,343.6 439.1,341.9 439.7,341.2 440.3,338.5 440.9,341.9 441.5,345.1 442.1,341.5 442.7,342.5 443.3,341.5 443.9,338.0 444.5,342.9 445.1,343.9 445.7,342.0 446.3,344.6 446.9,342.6 447.5,343.8 448.1,344.2 448.7,341.5 449.3,342.7 449.9,343.1 450.5,341.7 451.1,344.1 451.7,341.4 452.3,340.3 452.9,339.3" fill="none" stroke="#ff10f0" stroke-width="1.15" shape-rendering="auto"/><rect x="454.1" y="294" width="1.3" height="132" fill="#ececec" shape-rendering="auto"/></svg>
<span class="t r ax" style="right:603.5px;top:390.4px;">2</span>
<span class="t r ax" style="right:603.5px;top:363.8px;">4</span>
<span class="t r ax" style="right:603.5px;top:337.2px;">6</span>
<span class="t r ax" style="right:603.5px;top:310.6px;">8</span>
<span class="t r ax" style="right:603.5px;top:284.0px;">10</span>
<span class="t ax" style="left:470.3px;top:390.4px;">4</span>
<span class="t ax" style="left:470.3px;top:363.8px;">8</span>
<span class="t ax" style="left:470.3px;top:337.2px;">12</span>
<span class="t ax" style="left:470.3px;top:310.6px;">16</span>
<span class="t ax" style="left:470.3px;top:284.0px;">20</span>
<span class="t c ax" style="left:-50.1px;width:200px;top:427.5px;">0.0</span>
<span class="t c ax" style="left:-3.64444444444446px;width:200px;top:427.5px;">0.5</span>
<span class="t c ax" style="left:42.8111111111111px;width:200px;top:427.5px;">1.0</span>
<span class="t c ax" style="left:89.26666666666668px;width:200px;top:427.5px;">1.5</span>
<span class="t c ax" style="left:135.7222222222222px;width:200px;top:427.5px;">2.0</span>
<span class="t c ax" style="left:182.1777777777778px;width:200px;top:427.5px;">2.5</span>
<span class="t c ax" style="left:228.63333333333338px;width:200px;top:427.5px;">3.0</span>
<span class="t c ax" style="left:275.0888888888889px;width:200px;top:427.5px;">3.5</span>
<span class="t c ax" style="left:321.5444444444444px;width:200px;top:427.5px;">4.0</span>
<span class="t c ax" style="left:368.0px;width:200px;top:427.5px;">4.5</span>
<svg class="abs" style="left:556px;top:460px" width="89" height="63" viewBox="556 460 89 63">
<circle cx="600" cy="483" r="18.6" fill="#dcd9d3" stroke="#bdbab3" stroke-width="0.9"/><path d="M600 483 L598.4 501.3 A18.4 18.4 0 0 1 592.2 499.7 Z" fill="#aeaba4" fill-opacity="0.25"/><path d="M600 483 L592.2 499.7 A18.4 18.4 0 0 1 584.1 492.2 Z" fill="#aeaba4" fill-opacity="0.5"/><path d="M600 483 L584.1 492.2 A18.4 18.4 0 0 1 581.7 484.6 Z" fill="#aeaba4" fill-opacity="0.25"/><path d="M600 483 L601.6 464.7 A18.4 18.4 0 0 1 607.8 466.3 Z" fill="#aeaba4" fill-opacity="0.2"/><path d="M600 483 L607.8 466.3 A18.4 18.4 0 0 1 615.9 473.8 Z" fill="#aeaba4" fill-opacity="0.4"/><path d="M600 483 L615.9 473.8 A18.4 18.4 0 0 1 618.1 479.8 Z" fill="#aeaba4" fill-opacity="0.2"/><path d="M600 483 L581.7 481.4 A18.4 18.4 0 0 1 596.8 464.9 Z" fill="#ecebe6" fill-opacity="0.5"/><path d="M600 483 L618.1 486.2 A18.4 18.4 0 0 1 603.2 501.1 Z" fill="#ecebe6" fill-opacity="0.35"/>
<circle cx="600" cy="483" r="6.2" fill="#d6d3cc" stroke="#c2bfb8" stroke-width="0.6"/><circle cx="600" cy="483" r="2.8" fill="#e4e1db" stroke="#bdbab3" stroke-width="0.6"/>
<text x="560.5" y="520.5" font-family="Liberation Sans, sans-serif" font-weight="bold" font-size="18.5" fill="#ffffff" fill-opacity="0.38" stroke="#ffffff" stroke-opacity="0.2" stroke-width="0.8" textLength="86" lengthAdjust="spacingAndGlyphs">CDRLabs.com</text></svg>
<div class="gb" style="left:491px;top:124px;width:137px;height:82px"></div>
<span class="gl" style="left:499px;top:117.5px">Disc info</span>
<span class="t " style="left:499.3px;top:132px;">Type:</span>
<span class="t v" style="left:544.8px;top:132px;">DVD+R</span>
<span class="t " style="left:499.3px;top:149px;">ID:</span>
<span class="t v" style="left:544.8px;top:149px;">RITEK R04</span>
<span class="t " style="left:499.3px;top:167px;">Date:</span>
<span class="t v" style="left:544.8px;top:167px;">n/a</span>
<span class="t " style="left:499.3px;top:184.5px;">Label:</span>
<span class="t v" style="left:544.8px;top:184.5px;">n/a</span>
<div class="gb" style="left:491px;top:215px;width:137px;height:203px"></div>
<span class="gl" style="left:499px;top:209px">Settings</span>
<div class="sk" style="left:500px;top:225px;width:83px;height:20px;background:#fff"></div>
<span class="t " style="left:504.3px;top:227.5px;">8 X</span>
<div class="rs" style="left:565px;top:227px;width:16px;height:16px;"><svg width="16" height="16" viewBox="0 0 16 16" shape-rendering="crispEdges"><rect x="5" y="6" width="7" height="1"/><rect x="6" y="7" width="5" height="1"/><rect x="7" y="8" width="3" height="1"/><rect x="8" y="9" width="1" height="1"/></svg></div>
<div class="rs" style="left:592px;top:224px;width:23px;height:23px;"><svg width="23" height="23" viewBox="0 0 23 23"><rect x="4.5" y="3.5" width="13" height="15" fill="#fff" stroke="#000" shape-rendering="crispEdges"/>
<path d="M7.4 11.4 V7.7 H11" fill="none" stroke="#008000" stroke-width="1.2"/><path d="M13.2 7.7 L10.5 5.2 V10.2 Z" fill="#008000"/>
<path d="M14.7 10.8 V14.2 H11.5" fill="none" stroke="#008000" stroke-width="1.2"/><path d="M9.1 14.2 L11.8 11.7 V16.7 Z" fill="#008000"/></svg></div>
<span class="t " style="left:501.8px;top:254.5px;">Start:</span>
<span class="t " style="left:501.8px;top:277px;">End:</span>
<div class="sk" style="left:554px;top:251px;width:60px;height:20px;background:#fff"></div>
<span class="t " style="left:556.8px;top:253.5px;">0000 MB</span>
<div class="sk" style="left:554px;top:274px;width:60px;height:20px;background:#fff"></div>
<span class="t " style="left:556.8px;top:276.5px;">4480 MB</span>
<div class="sk" style="left:502px;top:296px;width:13px;height:13px;background:#fff"></div>
<span class="t " style="left:519.8px;top:294.5px;">Quick scan</span>
<div class="sk" style="left:502px;top:314px;width:13px;height:13px;background:#fff"><svg width="13" height="13" viewBox="0 0 13 13" shape-rendering="crispEdges"><g fill="#000"><rect x="3" y="5" width="1" height="3"/><rect x="4" y="6" width="1" height="3"/><rect x="5" y="7" width="1" height="3"/><rect x="6" y="6" width="1" height="3"/><rect x="7" y="5" width="1" height="3"/><rect x="8" y="4" width="1" height="3"/><rect x="9" y="3" width="1" height="3"/></g></svg></div>
<span class="t " style="left:519.8px;top:312.5px;">Show C1/PIE</span>
<div class="sk" style="left:502px;top:330px;width:13px;height:13px;background:#fff"><svg width="13" height="13" viewBox="0 0 13 13" shape-rendering="crispEdges"><g fill="#000"><rect x="3" y="5" width="1" height="3"/><rect x="4" y="6" width="1" height="3"/><rect x="5" y="7" width="1" height="3"/><rect x="6" y="6" width="1" height="3"/><rect x="7" y="5" width="1" height="3"/><rect x="8" y="4" width="1" height="3"/><rect x="9" y="3" width="1" height="3"/></g></svg></div>
<span class="t " style="left:519.8px;top:328.5px;">Show C2/PIF</span>
<div class="sk" style="left:502px;top:345px;width:13px;height:13px;background:#fff"><svg width="13" height="13" viewBox="0 0 13 13" shape-rendering="crispEdges"><g fill="#000"><rect x="3" y="5" width="1" height="3"/><rect x="4" y="6" width="1" height="3"/><rect x="5" y="7" width="1" height="3"/><rect x="6" y="6" width="1" height="3"/><rect x="7" y="5" width="1" height="3"/><rect x="8" y="4" width="1" height="3"/><rect x="9" y="3" width="1" height="3"/></g></svg></div>
<span class="t " style="left:519.8px;top:343.5px;">Show jitter</span>
<div class="sk" style="left:502px;top:361px;width:13px;height:13px;background:#fff"><svg width="13" height="13" viewBox="0 0 13 13" shape-rendering="crispEdges"><g fill="#000"><rect x="3" y="5" width="1" height="3"/><rect x="4" y="6" width="1" height="3"/><rect x="5" y="7" width="1" height="3"/><rect x="6" y="6" width="1" height="3"/><rect x="7" y="5" width="1" height="3"/><rect x="8" y="4" width="1" height="3"/><rect x="9" y="3" width="1" height="3"/></g></svg></div>
<span class="t " style="left:519.8px;top:359.5px;">Show read speed</span>
<div class="sk" style="left:502px;top:376px;width:13px;height:13px;background:#d6d3ce"><svg width="13" height="13" viewBox="0 0 13 13" shape-rendering="crispEdges"><g fill="#808080"><rect x="3" y="5" width="1" height="3"/><rect x="4" y="6" width="1" height="3"/><rect x="5" y="7" width="1" height="3"/><rect x="6" y="6" width="1" height="3"/><rect x="7" y="5" width="1" height="3"/><rect x="8" y="4" width="1" height="3"/><rect x="9" y="3" width="1" height="3"/></g></svg></div>
<span class="t dis" style="left:519.8px;top:374.5px;">Show write speed</span>
<div class="rs" style="left:550px;top:393px;width:75px;height:23px;"></div>
<span class="t c " style="left:487.5px;width:200px;top:396.5px;">Advanced</span>
<div class="gb" style="left:491px;top:425px;width:137px;height:24px"></div>
<span class="t " style="left:501.8px;top:431px;">Quality score:</span>
<span class="t r v" style="right:24px;top:431px;">95</span>
<div class="gb" style="left:491px;top:457px;width:137px;height:54px"></div>
<span class="t " style="left:501.8px;top:464.5px;">Progress:</span>
<span class="t r v" style="right:24px;top:464.5px;">100 %</span>
<span class="t " style="left:501.8px;top:480.5px;">Position:</span>
<span class="t r v" style="right:24px;top:480.5px;">4478 MB</span>
<span class="t " style="left:501.8px;top:495.5px;">Speed:</span>
<span class="t r v" style="right:24px;top:495.5px;">8.33 X</span>
<div class="gb" style="left:14px;top:457px;width:145px;height:55px"></div>
<span class="gl" style="left:22px;top:450px"><i class="sq" style="background:#00ffff"></i>PI Errors</span>
<span class="t " style="left:21.8px;top:466px;">Average:</span>
<span class="t r v" style="right:494.5px;top:466px;">52.61</span>
<span class="t " style="left:21.8px;top:480.5px;">Maximum:</span>
<span class="t r v" style="right:494.5px;top:480.5px;">223</span>
<span class="t " style="left:21.8px;top:495.5px;">Total:</span>
<span class="t r v" style="right:494.5px;top:495.5px;">821156</span>
<div class="gb" style="left:172px;top:457px;width:145px;height:55px"></div>
<span class="gl" style="left:180px;top:450px"><i class="sq" style="background:#ffff00"></i>PI Failures</span>
<span class="t " style="left:179.8px;top:466px;">Average:</span>
<span class="t r v" style="right:336.5px;top:466px;">0.20</span>
<span class="t " style="left:179.8px;top:480.5px;">Maximum:</span>
<span class="t r v" style="right:336.5px;top:480.5px;">9</span>
<span class="t " style="left:179.8px;top:495.5px;">Total:</span>
<span class="t r v" style="right:336.5px;top:495.5px;">2167</span>
<div class="gb" style="left:331px;top:457px;width:145px;height:41px"></div>
<span class="gl" style="left:339px;top:450px"><i class="sq" style="background:#ff00ff"></i>Jitter</span>
<span class="t " style="left:338.8px;top:466px;">Average:</span>
<span class="t r v" style="right:177.5px;top:466px;">11.14 %</span>
<span class="t " style="left:338.8px;top:480.5px;">Maximum:</span>
<span class="t r v" style="right:177.5px;top:480.5px;">13.9 %</span>
<span class="t " style="left:339.8px;top:500px;">PO failures:</span>
<span class="t r v" style="right:176.5px;top:500px;">0</span>
</div>
</body></html>
